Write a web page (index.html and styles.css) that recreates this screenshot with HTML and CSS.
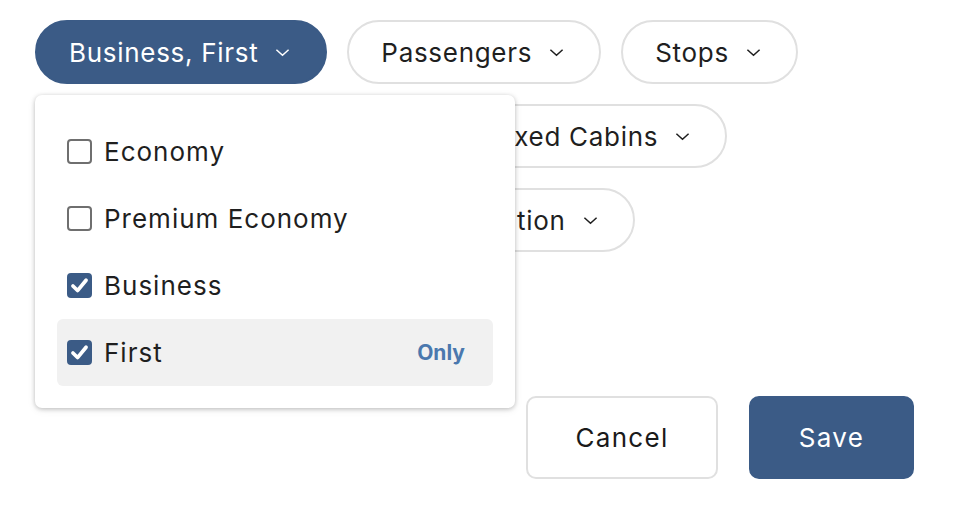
FILE: index.html
```html
<!DOCTYPE html>
<html>
<head>
<meta charset="utf-8">
<link rel="stylesheet" href="styles.css">
</head>
<body>
<div class="page">
  <div class="filters">
    <div class="row">
      <button class="pill active">Business, First <svg class="chev" viewBox="0 0 16 9"><path d="M1.5 1.5 L8 7.5 L14.5 1.5"/></svg></button>
      <button class="pill">Passengers <svg class="chev" viewBox="0 0 16 9"><path d="M1.5 1.5 L8 7.5 L14.5 1.5"/></svg></button>
      <button class="pill">Stops <svg class="chev" viewBox="0 0 16 9"><path d="M1.5 1.5 L8 7.5 L14.5 1.5"/></svg></button>
    </div>
    <div class="row">
      <button class="pill">Airlines <svg class="chev" viewBox="0 0 16 9"><path d="M1.5 1.5 L8 7.5 L14.5 1.5"/></svg></button>
      <button class="pill">Fares <svg class="chev" viewBox="0 0 16 9"><path d="M1.5 1.5 L8 7.5 L14.5 1.5"/></svg></button>
      <button class="pill">Mixed Cabins <svg class="chev" viewBox="0 0 16 9"><path d="M1.5 1.5 L8 7.5 L14.5 1.5"/></svg></button>
    </div>
    <div class="row">
      <button class="pill">Price <svg class="chev" viewBox="0 0 16 9"><path d="M1.5 1.5 L8 7.5 L14.5 1.5"/></svg></button>
      <button class="pill">Dates <svg class="chev" viewBox="0 0 16 9"><path d="M1.5 1.5 L8 7.5 L14.5 1.5"/></svg></button>
      <button class="pill">Duration <svg class="chev" viewBox="0 0 16 9"><path d="M1.5 1.5 L8 7.5 L14.5 1.5"/></svg></button>
    </div>
  </div>

  <div class="menu">
    <label class="item"><span class="box"></span><span class="label">Economy</span></label>
    <label class="item"><span class="box"></span><span class="label">Premium Economy</span></label>
    <label class="item"><span class="box checked"><svg viewBox="0 0 24 24"><path d="M4.5 12.5 L9.8 17.8 L19.5 6"/></svg></span><span class="label">Business</span></label>
    <label class="item hover"><span class="box checked"><svg viewBox="0 0 24 24"><path d="M4.5 12.5 L9.8 17.8 L19.5 6"/></svg></span><span class="label">First</span><span class="only">Only</span></label>
  </div>

  <div class="actions">
    <button class="btn cancel">Cancel</button>
    <button class="btn save">Save</button>
  </div>
</div>
</body>
</html>
```

FILE: styles.css
```css
* { box-sizing: border-box; }
html, body { margin: 0; padding: 0; background: #fff; }
body {
  font-family: Inter, "Liberation Sans", sans-serif;
  color: #1f1f1f;
  width: 962px;
  height: 522px;
  overflow: hidden;
}
.page {
  position: relative;
  padding: 20px 48px 0 35px;
}
.filters {
  display: flex;
  flex-direction: column;
  gap: 20px;
}
.row {
  display: flex;
  gap: 20px;
}
.pill {
  font-family: inherit;
  display: flex;
  align-items: center;
  gap: 17px;
  height: 64px;
  padding: 0 35px 0 32px;
  border: 2px solid #e0e0e0;
  border-radius: 32px;
  background: #fff;
  color: #1f1f1f;
  font-size: 26px;
  letter-spacing: 0.7px;
}
.pill.active {
  background: #3b5b86;
  border-color: #3b5b86;
  color: #fff;
}
.chev {
  width: 15px;
  height: 9px;
  fill: none;
  stroke: currentColor;
  stroke-width: 1.6;
}
.menu {
  position: absolute;
  left: 35px;
  top: 95px;
  width: 480px;
  padding: 23px 22px 22px;
  background: #fff;
  border-radius: 7px;
  box-shadow: 0 1px 4px rgba(0,0,0,0.22), 0 2px 8px rgba(0,0,0,0.08);
  display: flex;
  flex-direction: column;
}
.item {
  display: flex;
  align-items: center;
  height: 67px;
  padding: 0 28px 0 10px;
  border-radius: 6px;
  font-size: 26px;
  letter-spacing: 1px;
  color: #1f1f1f;
}
.item.hover { background: #f1f1f1; }
.box {
  width: 25px;
  height: 25px;
  border: 2px solid #6f6f6f;
  border-radius: 4px;
  margin-right: 12px;
  display: flex;
  align-items: center;
  justify-content: center;
  background: #fff;
}
.box.checked {
  background: #3b5b86;
  border-color: #3b5b86;
}
.box svg {
  width: 23px;
  height: 23px;
  fill: none;
  stroke: #fff;
  stroke-width: 4.2;
  stroke-linecap: round;
  stroke-linejoin: round;
}
.label { flex: 1; }
.only {
  color: #4a78ae;
  font-weight: 700;
  font-size: 21px;
  letter-spacing: 0;
}
.actions {
  display: flex;
  justify-content: flex-end;
  gap: 31px;
  margin-top: 144px;
}
.btn {
  font-family: inherit;
  height: 83px;
  border-radius: 10px;
  font-size: 26px;
  letter-spacing: 1.3px;
}
.cancel {
  width: 192px;
  background: #fff;
  border: 2px solid #e0e0e0;
  color: #1a1a1a;
}
.save {
  width: 165px;
  background: #3b5b86;
  border: 2px solid #3b5b86;
  color: #fff;
}
```
